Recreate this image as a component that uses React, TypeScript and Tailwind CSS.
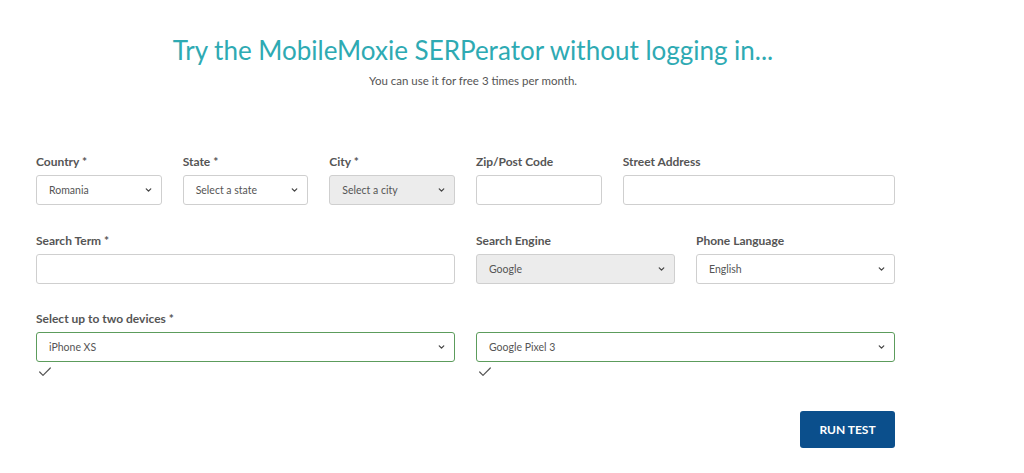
import { Check, ChevronDown } from 'lucide-react'

const font = { fontFamily: 'Lato, "Open Sans", Arial, sans-serif' }

function Label({ children }: { children: React.ReactNode }) {
  return (
    <div className="mb-[5px] h-4 text-[12px] font-bold leading-4 text-[#555]">
      {children}
    </div>
  )
}

function Select({
  value,
  disabled,
  valid,
}: {
  value: string
  disabled?: boolean
  valid?: boolean
}) {
  return (
    <div
      className={
        'relative flex h-[30px] items-center rounded-[3px] border pl-3 pr-7 pt-[2px] text-[10.5px] text-[#555] ' +
        (valid ? 'border-[#5c9c5c] ' : 'border-[#cfcfcf] ') +
        (disabled ? 'bg-[#ececec]' : 'bg-white')
      }
    >
      <span>{value}</span>
      <ChevronDown
        className="absolute right-[8px] top-1/2 h-[9px] w-[9px] -translate-y-1/2 text-[#444]"
        strokeWidth={3.5}
      />
    </div>
  )
}

function Input() {
  return <div className="h-[30px] rounded-[3px] border border-[#cfcfcf] bg-white" />
}

export default function App() {
  return (
    <div className="min-h-[473px] bg-white" style={font}>
      <div className="w-[946px] pt-[34px] text-center">
        <h1 className="text-[26px] font-normal leading-8 text-[#2eaab3]">
          Try the MobileMoxie SERPerator without logging in...
        </h1>
        <p className="mt-[7px] text-[11.5px] leading-4 text-[#555]">
          You can use it for free 3 times per month.
        </p>
      </div>

      <div className="ml-[36px] mt-[65px] w-[859px]">
        <div className="grid grid-cols-12 gap-x-[21px]">
          <div className="col-span-2">
            <Label>Country *</Label>
            <Select value="Romania" />
          </div>
          <div className="col-span-2">
            <Label>State *</Label>
            <Select value="Select a state" />
          </div>
          <div className="col-span-2">
            <Label>City *</Label>
            <Select value="Select a city" disabled />
          </div>
          <div className="col-span-2">
            <Label>Zip/Post Code</Label>
            <Input />
          </div>
          <div className="col-span-4">
            <Label>Street Address</Label>
            <Input />
          </div>
        </div>

        <div className="mt-[28px] grid grid-cols-12 gap-x-[21px]">
          <div className="col-span-6">
            <Label>Search Term *</Label>
            <Input />
          </div>
          <div className="col-span-3">
            <Label>Search Engine</Label>
            <Select value="Google" disabled />
          </div>
          <div className="col-span-3">
            <Label>Phone Language</Label>
            <Select value="English" />
          </div>
        </div>

        <div className="mt-[27px]">
          <Label>Select up to two devices *</Label>
          <div className="grid grid-cols-2 gap-x-[21px]">
            <div>
              <Select value="iPhone XS" valid />
              <Check className="ml-[1px] mt-[2px] h-[16px] w-[16px] text-[#555]" strokeWidth={1.8} />
            </div>
            <div>
              <Select value="Google Pixel 3" valid />
              <Check className="ml-[1px] mt-[2px] h-[16px] w-[16px] text-[#555]" strokeWidth={1.8} />
            </div>
          </div>
        </div>

        <div className="mt-[31px] flex justify-end">
          <button
            type="button"
            className="h-[37px] w-[95px] rounded-[3px] bg-[#0b4f8c] text-[12px] font-bold text-white"
          >
            RUN TEST
          </button>
        </div>
      </div>
    </div>
  )
}
